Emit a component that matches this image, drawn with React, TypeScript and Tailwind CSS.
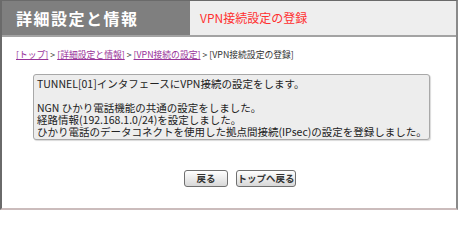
import React from "react";

const jp = { fontFamily: '"Noto Sans CJK JP", "Noto Sans", sans-serif' };

export default function App() {
  return (
    <div className="w-[459px] h-[211px] bg-white" style={jp}>
      <div className="w-[458px] h-[210px] border-l-2 border-l-[#6a6a6a] border-t border-t-[#6a6a6a] border-r-2 border-r-[#8a8a8a] border-b-2 border-b-[#cbbcbc] flex flex-col">
        <div className="flex h-[36px] border-b-2 border-b-[#a3a3a3] shrink-0">
          <div className="w-[188px] bg-[#7f7f7f] text-white font-bold text-[16px] pl-[14px] flex items-center tracking-[1.5px]">
            詳細設定と情報
          </div>
          <div className="flex-1 bg-[#eeeeee] text-[#ff3030] text-[12px] pl-[10px] flex items-center">
            VPN接続設定の登録
          </div>
        </div>
        <div className="pl-[14px] mt-[12px] text-[8.8px] leading-[12px] text-[#333] whitespace-nowrap">
          <a className="text-[#993399] underline">[トップ]</a> &gt;{" "}
          <a className="text-[#993399] underline">[詳細設定と情報]</a> &gt;{" "}
          <a className="text-[#993399] underline">[VPN接続の設定]</a> &gt; [VPN接続設定の登録]
        </div>
        <div className="ml-[31px] mt-[13px] w-[397px] h-[66px] rounded-[3px] border border-[#a8a8a8] bg-[#ededed] shadow-[1px_1px_1px_rgba(0,0,0,0.15)] px-[3px] py-[3px] text-[10.5px] leading-[12px] text-[#222] whitespace-nowrap">
          <div>TUNNEL[01]インタフェースにVPN接続の設定をします。</div>
          <div>&nbsp;</div>
          <div>NGN ひかり電話機能の共通の設定をしました。</div>
          <div>経路情報(192.168.1.0/24)を設定しました。</div>
          <div>ひかり電話のデータコネクトを使用した拠点間接続(IPsec)の設定を登録しました。</div>
        </div>
        <div className="flex gap-[8px] ml-[182px] mt-[30px]">
          <button className="w-[44px] h-[17px] rounded-[3px] border border-[#707070] bg-gradient-to-b from-white to-[#d8d8d8] text-[9.5px] font-bold text-[#333] flex items-center justify-center leading-none">
            戻る
          </button>
          <button className="w-[60px] h-[17px] rounded-[3px] border border-[#707070] bg-gradient-to-b from-white to-[#d8d8d8] text-[9.5px] font-bold text-[#333] flex items-center justify-center leading-none">
            トップへ戻る
          </button>
        </div>
      </div>
    </div>
  );
}
